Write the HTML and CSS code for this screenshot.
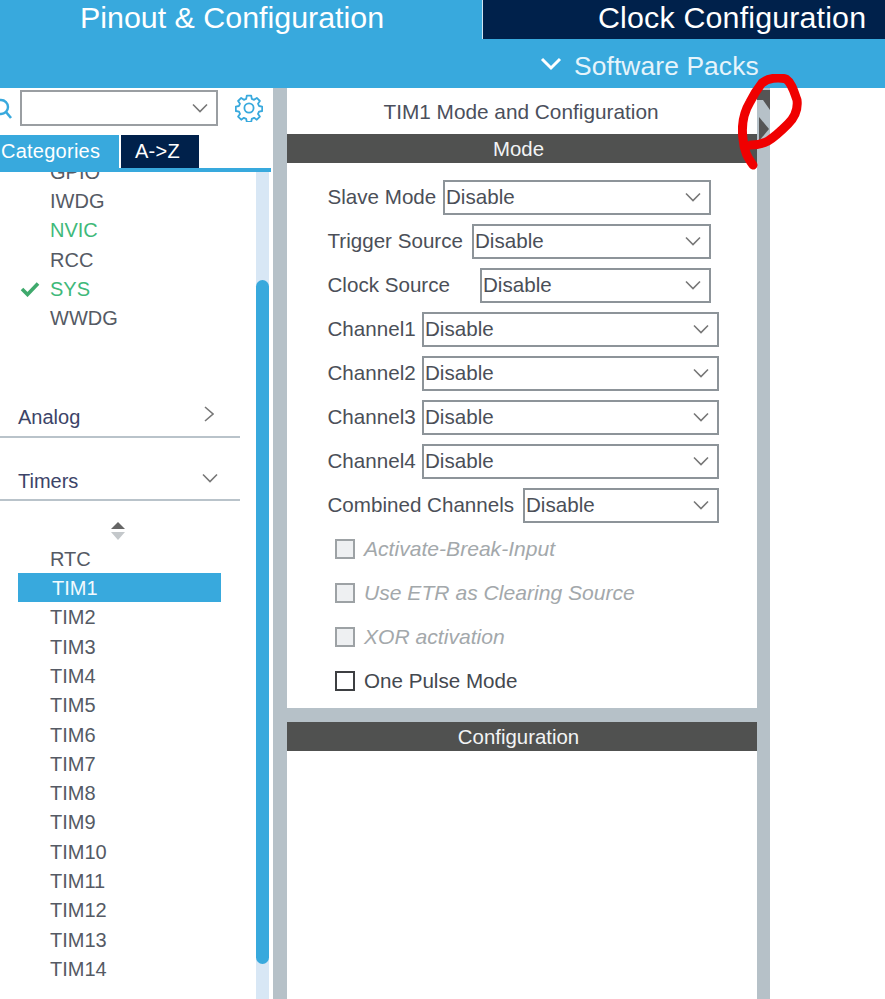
FILE: index.html
```html
<!DOCTYPE html>
<html lang="en">
<head>
<meta charset="utf-8">
<title>TIM1 Mode and Configuration</title>
<link rel="stylesheet" href="styles.css">
</head>
<body>
<svg class="defs" width="0" height="0">
  <symbol id="chev" viewBox="0 0 16 10"><path d="M1 1.5 8 8.5 15 1.5" fill="none" stroke="currentColor" stroke-width="1.6"/></symbol>
</svg>
<div class="app">
  <header class="header">
    <div class="tabs">
      <div class="tab tab-active"><span>Pinout &amp; Configuration</span></div>
      <div class="tab tab-dark"><span>Clock Configuration</span></div>
    </div>
    <div class="packs">
      <svg class="packs-chev" viewBox="0 0 22 14"><path d="M2 2 11 11 20 2" fill="none" stroke="#fff" stroke-width="3"/></svg>
      <span>Software Packs</span>
    </div>
  </header>
  <main class="main">
    <aside class="sidebar">
      <div class="search">
        <svg class="mag" viewBox="0 0 20 22"><circle cx="5" cy="9" r="7" fill="none" stroke="#38a9dd" stroke-width="2.4"/><path d="M10 14 15 20" stroke="#38a9dd" stroke-width="2.6"/></svg>
        <div class="combo"><svg class="chev combo-chev"><use href="#chev"/></svg></div>
        <svg class="gear" viewBox="0 0 28 28">
          <circle cx="14" cy="14" r="4.6" fill="none" stroke="#38a9dd" stroke-width="1.8"/>
          <path d="M11.8 1.6h4.4l.6 3.2 2.3 1 2.7-1.9 3.1 3.1-1.9 2.7 1 2.3 3.2.6v4.4l-3.2.6-1 2.3 1.9 2.7-3.1 3.1-2.7-1.9-2.3 1-.6 3.2h-4.4l-.6-3.2-2.3-1-2.7 1.9-3.1-3.1 1.9-2.7-1-2.3-3.2-.6v-4.4l3.2-.6 1-2.3-1.9-2.7 3.1-3.1 2.7 1.9 2.3-1z" fill="none" stroke="#38a9dd" stroke-width="1.8" stroke-linejoin="round"/>
        </svg>
      </div>
      <div class="cat-tabs">
        <div class="cat-tab cat-on">Categories</div>
        <div class="cat-tab cat-off">A-&gt;Z</div>
      </div>
      <div class="side-body">
        <div class="tree">
          <ul class="items items-top">
            <li class="item">GPIO</li>
            <li class="item">IWDG</li>
            <li class="item item-green">NVIC</li>
            <li class="item">RCC</li>
            <li class="item item-green">
              <svg class="check" viewBox="0 0 20 16"><path d="M2 8 7.5 13.5 18 2.5" fill="none" stroke="#3fa96c" stroke-width="3.6"/></svg>SYS
            </li>
            <li class="item">WWDG</li>
          </ul>
          <div class="group group-analog">
            <span>Analog</span>
            <svg class="group-chev" viewBox="0 0 10 16"><path d="M1 1 9 8 1 15" fill="none" stroke="#777" stroke-width="1.6"/></svg>
          </div>
          <div class="group group-timers">
            <span>Timers</span>
            <svg class="chev group-chev-down"><use href="#chev"/></svg>
          </div>
          <div class="sort">
            <svg viewBox="0 0 14 18" class="sort-icon"><path d="M7 0 14 7H0z" fill="#666"/><path d="M0 10H14L7 18z" fill="#c4c8cb"/></svg>
          </div>
          <ul class="items">
            <li class="item">RTC</li>
            <li class="item item-sel">TIM1</li>
            <li class="item">TIM2</li>
            <li class="item">TIM3</li>
            <li class="item">TIM4</li>
            <li class="item">TIM5</li>
            <li class="item">TIM6</li>
            <li class="item">TIM7</li>
            <li class="item">TIM8</li>
            <li class="item">TIM9</li>
            <li class="item">TIM10</li>
            <li class="item">TIM11</li>
            <li class="item">TIM12</li>
            <li class="item">TIM13</li>
            <li class="item">TIM14</li>
          </ul>
        </div>
        <div class="track"><div class="thumb"></div></div>
      </div>
    </aside>
    <div class="rail rail-left"></div>
    <section class="panel">
      <div class="panel-title">TIM1 Mode and Configuration</div>
      <div class="bar bar-mode">Mode</div>
      <div class="form">
        <div class="row"><span>Slave Mode</span><div class="select w-268"><span>Disable</span><svg class="chev"><use href="#chev"/></svg></div></div>
        <div class="row"><span>Trigger Source</span><div class="select w-239"><span>Disable</span><svg class="chev"><use href="#chev"/></svg></div></div>
        <div class="row"><span>Clock Source</span><div class="select w-231"><span>Disable</span><svg class="chev"><use href="#chev"/></svg></div></div>
        <div class="row"><span>Channel1</span><div class="select w-297"><span>Disable</span><svg class="chev"><use href="#chev"/></svg></div></div>
        <div class="row"><span>Channel2</span><div class="select w-297"><span>Disable</span><svg class="chev"><use href="#chev"/></svg></div></div>
        <div class="row"><span>Channel3</span><div class="select w-297"><span>Disable</span><svg class="chev"><use href="#chev"/></svg></div></div>
        <div class="row"><span>Channel4</span><div class="select w-297"><span>Disable</span><svg class="chev"><use href="#chev"/></svg></div></div>
        <div class="row"><span>Combined Channels</span><div class="select w-196"><span>Disable</span><svg class="chev"><use href="#chev"/></svg></div></div>
        <div class="cb-row cb-off"><span class="box"></span><span>Activate-Break-Input</span></div>
        <div class="cb-row cb-off"><span class="box"></span><span>Use ETR as Clearing Source</span></div>
        <div class="cb-row cb-off"><span class="box"></span><span>XOR activation</span></div>
        <div class="cb-row"><span class="box"></span><span>One Pulse Mode</span></div>
      </div>
      <div class="panel-gap"></div>
      <div class="bar">Configuration</div>
    </section>
    <div class="rail rail-right">
      <svg class="collapse" viewBox="0 0 13 52"><path d="M0 0H13V20L6 10H0z" fill="#555"/><path d="M2 27 12 39 2 51z" fill="#555"/></svg>
    </div>
  </main>
  <svg class="scribble" viewBox="0 0 70 100"><path d="M15 91C10 84 6 78 5 65 3 50 6 38 12 28 16 20 20 14 24 9 30 4 40 3 48 5 54 9 56 18 59 26 60 34 58 42 50 50 44 56 38 62 30 67 24 70 18 71 13 71" fill="none" stroke="#f00000" stroke-width="9" stroke-linecap="round" stroke-linejoin="round"/></svg>
</div>
</body>
</html>
```
FILE: styles.css
```css
* { box-sizing: border-box; }
html, body { margin: 0; padding: 0; background: #fff; }
body { font-family: "Liberation Sans", Arial, sans-serif; color: #4b4f58; overflow: hidden; }
.defs { position: absolute; }
.app { position: relative; width: 885px; height: 999px; overflow: hidden; }

.header { background: #38a9dd; height: 88px; color: #fff; }
.tabs { display: flex; height: 39px; }
.tab { font-size: 30.4px; line-height: 34px; }
.tab-active { width: 483px; padding-left: 80px; border-right: 1px solid #cfe6f3; }
.tab-dark { flex: 1; background: #00214b; padding-left: 115px; letter-spacing: .16px; }
.packs { display: flex; align-items: center; height: 49px; padding-left: 540px; padding-top: 5px; font-size: 26.4px; color: #e6f4fb; letter-spacing: .1px; }
.packs-chev { width: 22px; height: 14px; margin-right: 12px; margin-top: -5px; }

.main { display: flex; height: 911px; }
.sidebar { width: 273px; display: flex; flex-direction: column; overflow: hidden; }
.search { display: flex; align-items: center; height: 47px; padding-bottom: 8px; }
.mag { width: 20px; height: 22px; margin-left: -4px; margin-top: 2px; margin-right: 4px; flex: none; }
.combo { width: 198px; height: 36px; border: 2px solid #9a9ea2; position: relative; display: flex; align-items: center; justify-content: flex-end; padding-right: 8px; }
.chev { width: 16px; height: 10px; color: #777; flex: none; }
.gear { width: 28px; height: 28px; margin-left: 17px; }
.cat-tabs { display: flex; height: 33px; gap: 2px; font-size: 20px; letter-spacing: .25px; }
.cat-tab { display: flex; align-items: center; color: #fff; }
.cat-on { width: 119px; background: #38a9dd; padding-left: 1px; }
.cat-off { width: 78px; background: #00214b; padding-left: 14px; }
.side-body { flex: 1; display: flex; min-height: 0; border-top: 4px solid #38a9dd; margin-right: 2px; }
.tree { width: 256px; overflow: hidden; flex: none; }
.items { list-style: none; margin: 0; padding: 0; }
.items-top { margin-top: -15.3px; }
.item { position: relative; height: 29.3px; line-height: 31px; padding-left: 50px; font-size: 20px; color: #555a64; }
.item-green { color: #3fb97a; }
.item-sel { margin-left: 18px; width: 203px; padding-left: 34px; background: #38a9dd; color: #f2fafe; }
.check { position: absolute; left: 20px; top: 7px; width: 20px; height: 16px; }
.group { display: flex; align-items: center; justify-content: space-between; width: 240px; padding: 0 22px 0 18px; border-bottom: 2px solid #b9c3ca; font-size: 20px; color: #3c4468; }
.group-analog { height: 43px; margin-top: 62.3px; padding-top: 4px; }
.group-timers { height: 43px; margin-top: 20px; padding-top: 6px; }
.group-chev { width: 10px; height: 16px; margin-right: 4px; margin-bottom: 6px; }
.group-chev-down { margin-bottom: 6px; }
.sort { display: flex; justify-content: center; width: 236px; height: 43px; padding-top: 21px; }
.sort-icon { width: 14px; height: 18px; }
.track { width: 13px; background: #d8e7f5; flex: none; }
.thumb { width: 13px; height: 684px; margin-top: 108px; background: #38a9dd; border-radius: 7px; }

.rail { width: 13px; background: #b6c1c8; flex: none; }
.rail-left { width: 14px; }
.rail-right { position: relative; }
.collapse { position: absolute; left: 0; top: 2px; width: 13px; height: 52px; }

.panel { width: 470px; display: flex; flex-direction: column; }
.panel-title { height: 46px; display: flex; align-items: center; justify-content: center; font-size: 20.8px; padding: 1px 2px 0 0; color: #4b4f5c; }
.bar { height: 29px; background: #505150; color: #f2f4f5; font-size: 20.4px; display: flex; align-items: center; justify-content: center; flex: none; padding: 1px 7px 0 0; }
.form { padding-top: 12px; height: 545px; }
.row { height: 44px; display: flex; align-items: center; padding-left: 40.5px; font-size: 20.6px; }
.select { height: 35px; border: 2px solid #8d9499; display: flex; align-items: center; justify-content: space-between; padding: 0 8px 0 1px; margin-left: auto; font-size: 20.6px; background: #fff; }
.w-268 { width: 268px; margin-right: 46px; }
.w-239 { width: 239px; margin-right: 46px; }
.w-231 { width: 231px; margin-right: 46px; }
.w-297 { width: 297px; margin-right: 38px; }
.w-196 { width: 196px; margin-right: 38px; }
.cb-row { height: 44px; display: flex; align-items: center; padding-left: 48px; gap: 9px; font-size: 20.6px; color: #44484f; }
.box { width: 20px; height: 20px; border: 2px solid #3d3f42; background: #fff; flex: none; }
.cb-off { color: #a3a8ab; font-size: 21.1px; font-style: italic; }
.cb-off .box { border-color: #9da2a5; background: #eef0f2; }
.panel-gap { height: 14px; background: #b6c1c8; flex: none; }

.scribble { position: absolute; left: 738px; top: 74px; width: 70px; height: 100px; }
```
